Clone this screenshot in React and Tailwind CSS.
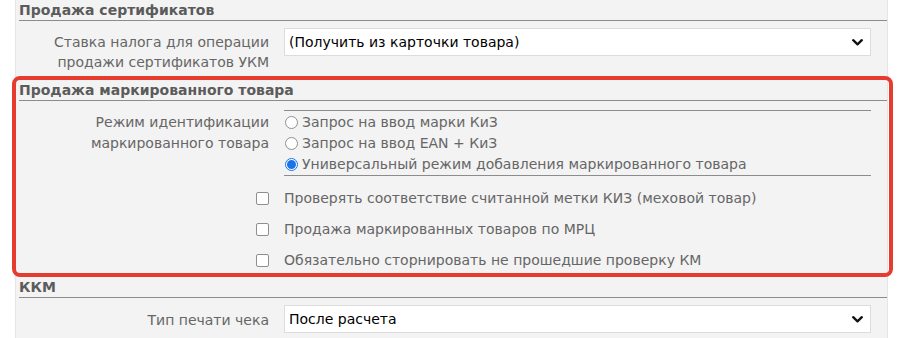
import React from "react";

const font = { fontFamily: '"DejaVu Sans", Verdana, sans-serif' };

function Chevron() {
  return (
    <svg width="11" height="7" viewBox="0 0 11 7" className="shrink-0">
      <path d="M1.2 1.2 L5.5 5.3 L9.8 1.2" fill="none" stroke="#111" strokeWidth="2.3" strokeLinecap="round" strokeLinejoin="round" />
    </svg>
  );
}

function Select({ value }) {
  return (
    <div className="flex h-[28px] w-[587px] items-center justify-between border border-[#dcdcdc] bg-white pl-[4px] pr-[7px] text-[14px] text-black">
      <span>{value}</span>
      <Chevron />
    </div>
  );
}

function Header({ children }) {
  return (
    <div className="ml-[3px] h-[21px] border-b border-[#8c8c8c] text-[14px] font-bold leading-[20px] text-[#5b5b5b]">
      {children}
    </div>
  );
}

function Radio({ checked }) {
  return checked ? (
    <span className="flex h-[13px] w-[13px] shrink-0 items-center justify-center rounded-full border border-[#1a73e8] bg-white">
      <span className="h-[9px] w-[9px] rounded-full bg-[#1a73e8]" />
    </span>
  ) : (
    <span className="h-[13px] w-[13px] shrink-0 rounded-full border border-[#8f8f8f] bg-white" />
  );
}

function Checkbox() {
  return <span className="h-[13px] w-[13px] shrink-0 rounded-[2px] border border-[#8f8f8f] bg-white" />;
}

function CheckRow({ text }) {
  return (
    <div className="flex h-[31px] items-center">
      <div className="flex w-[253px] justify-end">
        <Checkbox />
      </div>
      <div className="ml-[15px] text-[14px] text-[#666]">{text}</div>
    </div>
  );
}

export default function App() {
  return (
    <div className="relative h-[338px] w-[905px] overflow-hidden bg-white" style={font}>
      <div className="ml-[15px] h-full w-[873px] border-x border-[#e6e6e6] bg-[#f3f3f3]">
        <Header>Продажа сертификатов</Header>
        <div className="flex h-[59px]">
          <div className="w-[253px] pt-[11px] text-right text-[14px] leading-[20px] text-[#666]">
            Ставка налога для операции
            <br />
            продажи сертификатов УКМ
          </div>
          <div className="ml-[15px] pt-[7px]">
            <Select value="(Получить из карточки товара)" />
          </div>
        </div>

        <Header>Продажа маркированного товара</Header>
        <div className="mt-[9px] flex">
          <div className="w-[253px] pt-[2px] text-right text-[14px] leading-[21px] text-[#666]">
            Режим идентификации
            <br />
            маркированного товара
          </div>
          <div className="ml-[15px] w-[587px] border-y border-[#8c8c8c] pt-[1px]">
            {[
              ["Запрос на ввод марки КиЗ", false],
              ["Запрос на ввод EAN + КиЗ", false],
              ["Универсальный режим добавления маркированного товара", true],
            ].map(([t, c]) => (
              <div key={t} className="flex h-[21px] items-center pl-[1px]">
                <Radio checked={c} />
                <span className="ml-[4px] text-[14px] text-[#666]">{t}</span>
              </div>
            ))}
          </div>
        </div>
        <div className="mt-[7px]">
          <CheckRow text="Проверять соответствие считанной метки КИЗ (меховой товар)" />
          <CheckRow text="Продажа маркированных товаров по МРЦ" />
          <CheckRow text="Обязательно сторнировать не прошедшие проверку КМ" />
        </div>

        <div className="mt-[1px]">
          <Header>ККМ</Header>
        </div>
        <div className="flex">
          <div className="w-[253px] pt-[12px] text-right text-[14px] leading-[20px] text-[#666]">Тип печати чека</div>
          <div className="ml-[15px] pt-[7px]">
            <Select value="После расчета" />
          </div>
        </div>
      </div>

      <div className="pointer-events-none absolute left-[12px] top-[76px] h-[201px] w-[881px] rounded-[8px] border-[4px] border-[#e63c30]" />
    </div>
  );
}
